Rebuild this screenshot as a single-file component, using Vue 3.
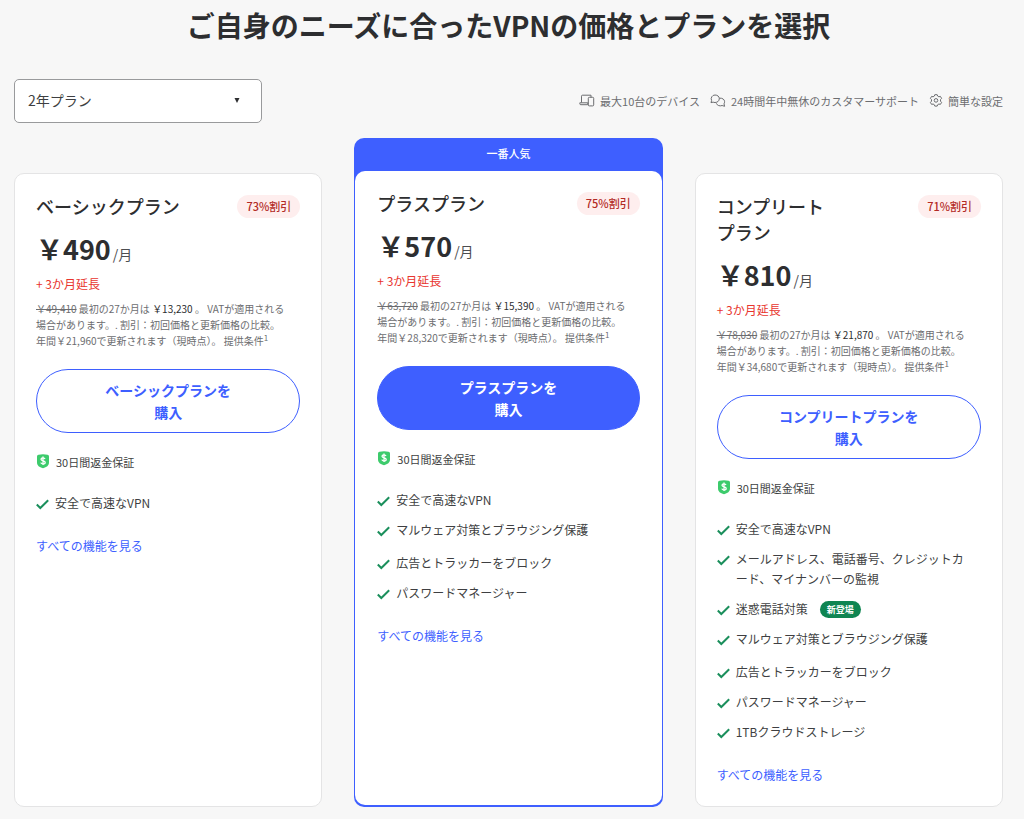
<script setup>
import { ref } from 'vue'

const period = ref('2')

const vpn = { text: '安全で高速なVPN' }
const malware = { text: 'マルウェア対策とブラウジング保護', spaced: true }
const ads = { text: '広告とトラッカーをブロック' }
const passwords = { text: 'パスワードマネージャー' }

const plans = [
  {
    id: 'basic', name: ['ベーシックプラン'], off: '73%割引', price: '490',
    old: '￥49,410', total: '￥13,230', renew: '￥21,960', buy: 'ベーシックプランを',
    features: [vpn],
  },
  {
    id: 'plus', name: ['プラスプラン'], off: '75%割引', price: '570', popular: true,
    old: '￥63,720', total: '￥15,390', renew: '￥28,320', buy: 'プラスプランを',
    features: [vpn, malware, ads, passwords],
  },
  {
    id: 'complete', name: ['コンプリート', 'プラン'], off: '71%割引', price: '810',
    old: '￥78,030', total: '￥21,870', renew: '￥34,680', buy: 'コンプリートプランを',
    features: [
      vpn,
      { text: 'メールアドレス、電話番号、クレジットカ', more: 'ード、マイナンバーの監視' },
      { text: '迷惑電話対策', tag: '新登場' },
      malware, ads, passwords,
      { text: '1TBクラウドストレージ' },
    ],
  },
]
</script>

<template>
  <main class="page" lang="ja">
    <h1>ご自身のニーズに合ったVPNの価格とプランを選択</h1>

    <div class="toolbar">
      <div class="period">
        <select v-model="period" aria-label="プラン期間">
          <option value="2">2年プラン</option>
          <option value="1">1年プラン</option>
          <option value="0">月間プラン</option>
        </select>
        <svg class="arrow" viewBox="0 0 6 5" aria-hidden="true"><path d="M0.5 0h5L3 5z" fill="#2d2e30" /></svg>
      </div>
      <ul class="perks">
        <li>
          <svg viewBox="0 0 16 14" aria-hidden="true">
            <path d="M2.5 8.500V2.200a1 1 0 0 1 1-1h8.500M0.8 8.800h8v1.900H1.800a1 1 0 0 1-1-1zM12 1.200v2" />
            <rect x="9.300" y="3.300" width="5.400" height="8.600" rx="1" />
          </svg>
          最大10台のデバイス
        </li>
        <li>
          <svg viewBox="0 0 16 14" aria-hidden="true">
            <path d="M1 8.700 1.600 6.500A3.800 3.800 0 0 1 5 1c2.500 0 4.300 1.500 4.300 3.700S7.500 8.500 5 8.500c-.7 0-1.300-.1-1.900-.4z" />
            <path d="M9.300 4.200c3 -.4 5.300 1.200 5.300 3.500 0 .8-.2 1.500-.6 2.100l.6 2.500-2.500-.8c-2.300.9-4.900.1-5.800-2.200" />
          </svg>
          24時間年中無休のカスタマーサポート
        </li>
        <li>
          <svg class="gear" viewBox="0 0 14 14" aria-hidden="true">
            <path d="M5.800 .7h2.400l.5 1.400 1.200.7 1.500-.4 1.200 2-1.100 1.200v1.600l1.100 1.200-1.200 2-1.500-.4-1.200.7-.5 1.400H5.800l-.5-1.400-1.200-.7-1.500.4-1.200-2 1.100-1.200V5.600L1.400 4.400l1.200-2 1.500.4 1.200-.7z" />
            <circle cx="7" cy="6.400" r="1.800" />
          </svg>
          簡単な設定
        </li>
      </ul>
    </div>

    <div class="plans">
      <section v-for="p in plans" :key="p.id" class="plan" :class="{ popular: p.popular }">
        <p v-if="p.popular" class="ribbon">一番人気</p>
        <div class="card">
          <header>
            <h2><span v-for="n in p.name" :key="n" class="line">{{ n }}</span></h2>
            <span class="off">{{ p.off }}</span>
          </header>
          <p class="price"><strong>￥{{ p.price }}</strong><span>/月</span></p>
          <p class="extra">+ 3か月延長</p>
          <p class="terms">
            <span class="line"><s>{{ p.old }}</s> 最初の27か月は <b>{{ p.total }}</b> 。 VATが適用される</span>
            <span class="line">場合があります。. 割引：初回価格と更新価格の比較。</span>
            <span class="line">年間{{ p.renew }}で更新されます（現時点）。 提供条件<sup>1</sup></span>
          </p>
          <button type="button" class="buy">
            <span class="line">{{ p.buy }}</span>
            <span class="line">購入</span>
          </button>
          <p class="refund">
            <svg viewBox="0 0 14 16" aria-hidden="true">
              <path d="M2.500 .8Q7 -.3 11.500 .8 13 1.100 13 2.600V8.300C13 11.700 10.700 13.300 7 14.200 3.300 13.300 1 11.700 1 8.300V2.600Q1 1.100 2.500 .8z" fill="#3dcb6c" />
              <path d="M9 4.900c-.3-.8-1-1.100-2-1.100-1.200 0-2 .5-2 1.400 0 2.200 4.200 1 4.200 3.200 0 .9-.9 1.500-2.200 1.500-1.100 0-1.900-.4-2.200-1.300M7 2.600v8.500" fill="none" stroke="#fff" stroke-width="1.300" />
            </svg>
            30日間返金保証
          </p>
          <ul class="features">
            <li v-for="f in p.features" :key="f.text" :class="{ spaced: f.spaced }">
              <svg viewBox="0 0 13 20" aria-hidden="true"><path d="M0.800 11.500 4.300 15 12.200 7.300" /></svg>
              <span>{{ f.text }}<span v-if="f.more" class="line">{{ f.more }}</span></span>
              <span v-if="f.tag" class="tag">{{ f.tag }}</span>
            </li>
          </ul>
          <a href="#features" class="all">すべての機能を見る</a>
        </div>
      </section>
    </div>
  </main>
</template>

<style>
body {
  background: #f7f7f7;
}
</style>

<style scoped>
.page {
  padding: 0 21px 12px 14px;
  font-family: "Noto Sans CJK JP", "Noto Sans", sans-serif;
  color: #2d2e30;
  box-sizing: border-box;
}
h1, h2, p, ul {
  margin: 0;
  padding: 0;
}
ul {
  list-style: none;
}
.line {
  display: block;
}
h1 {
  font-size: 28px;
  line-height: 50px;
  font-weight: 700;
  text-align: center;
}
.toolbar {
  display: flex;
  justify-content: space-between;
  align-items: center;
  padding-top: 29px;
}
.period {
  position: relative;
}
.period select {
  display: block;
  appearance: none;
  width: 248px;
  height: 44px;
  padding: 0 13px 2px;
  border: 1px solid #999a9c;
  border-radius: 5px;
  background: #fff;
  color: #3e3f42;
  font: 400 14px/20px "Noto Sans CJK JP", sans-serif;
}
.arrow {
  position: absolute;
  right: 22px;
  top: 19px;
  width: 6px;
  height: 5px;
  pointer-events: none;
}
.perks {
  display: flex;
  gap: 10px;
  color: #6c6d70;
  font-size: 11px;
  line-height: 20px;
}
.perks li {
  display: flex;
  align-items: center;
  gap: 5px;
}
.perks svg {
  width: 16px;
  height: 14px;
  fill: none;
  stroke: #6c6d70;
}
.perks .gear {
  width: 14px;
}
.plans {
  display: grid;
  grid-template-columns: repeat(3, 1fr);
  gap: 32px;
  padding-top: 15px;
}
.plan {
  display: flex;
  flex-direction: column;
  padding-top: 35px;
}
.popular {
  padding: 0 1px 2px;
  background: #3e5fff;
  border-radius: 10px;
}
.ribbon {
  padding-bottom: 2px;
  color: #fff;
  font-size: 11px;
  line-height: 31px;
  font-weight: 500;
  text-align: center;
}
.card {
  flex: 1;
  padding: 19px 21px 21px;
  border: 1px solid #e4e4e5;
  border-radius: 10px;
  background: #fff;
}
.popular .card {
  padding-left: 22px;
  padding-right: 22px;
  border: 0;
}
header {
  display: flex;
  justify-content: space-between;
  align-items: flex-start;
}
h2 {
  font-size: 18px;
  line-height: 26px;
  font-weight: 500;
}
.off {
  margin-top: 2px;
  padding: 0 9px;
  border-radius: 12px;
  background: #feeeee;
  color: #b32a25;
  font-size: 11px;
  line-height: 23px;
  font-weight: 500;
}
.price {
  margin-top: 12px;
  line-height: 35px;
  white-space: nowrap;
}
.price strong {
  font-size: 27px;
  font-weight: 700;
}
.price span {
  margin-left: 2px;
  font-size: 14px;
  line-height: 20px;
  color: #4c4d50;
}
.extra {
  margin-top: 3px;
  color: #e8352e;
  font-size: 12px;
  line-height: 20px;
}
.terms {
  margin-top: 7px;
  color: #6c6d70;
  font-size: 10px;
  line-height: 16px;
  white-space: nowrap;
}
.terms b {
  font-weight: 400;
  color: #2d2e30;
}
.terms sup {
  font-size: 8px;
  line-height: 0;
}
.buy {
  display: block;
  width: 100%;
  margin-top: 20px;
  padding: 9px 20px;
  border: 1px solid #3e5fff;
  border-radius: 32px;
  background: #fff;
  color: #3e5fff;
  font: 700 14px/22px "Noto Sans CJK JP", sans-serif;
}
.popular .buy {
  background: #3e5fff;
  color: #fff;
}
.refund {
  display: flex;
  align-items: center;
  gap: 6px;
  margin-top: 19px;
  font-size: 11px;
  line-height: 20px;
  color: #3e3f42;
}
.refund svg {
  width: 14px;
  height: 16px;
}
.features {
  display: flex;
  flex-direction: column;
  gap: 10px;
  margin-top: 21px;
  font-size: 12px;
  line-height: 20px;
  color: #3e3f42;
}
.features li {
  display: flex;
  align-items: flex-start;
}
.features .spaced {
  padding-bottom: 3px;
}
.features svg {
  flex: none;
  width: 13px;
  height: 20px;
  margin-right: 6px;
  fill: none;
  stroke: #1b8f5c;
  stroke-width: 2;
}
.tag {
  align-self: center;
  margin-left: 12px;
  padding: 0 7px;
  border-radius: 9px;
  background: #0f8552;
  color: #fff;
  font-size: 9px;
  line-height: 17px;
  font-weight: 700;
}
.all {
  display: block;
  margin-top: 23px;
  color: #3e5fff;
  font-size: 12px;
  line-height: 20px;
  text-decoration: none;
}
</style>
